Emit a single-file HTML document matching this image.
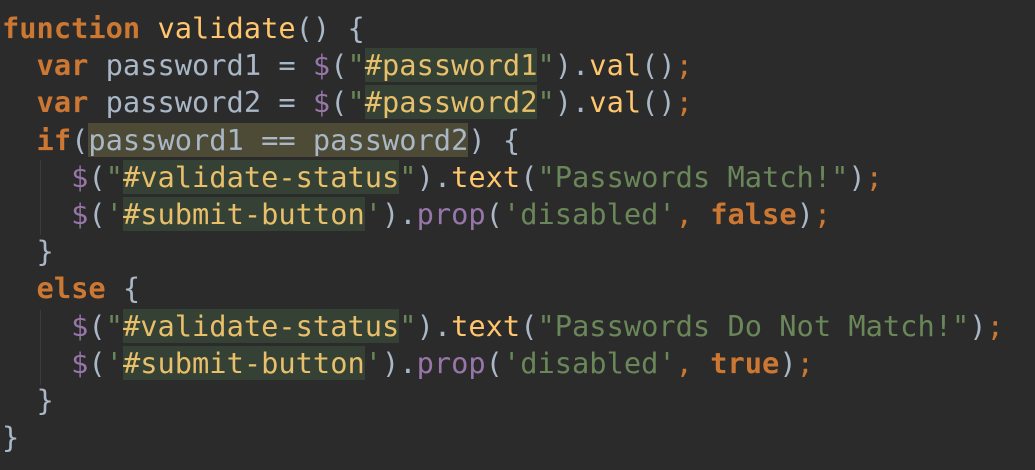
<!DOCTYPE html>
<html><head><style>
html,body{margin:0;padding:0;background:#2b2b2b;width:1035px;height:470px;overflow:hidden}
pre{margin:0;position:absolute;left:2px;top:10px;font-family:"DejaVu Sans Mono","Liberation Mono",monospace;font-size:28.7px;line-height:37.2px;color:#a9b7c6}
.k{color:#cc7832;font-weight:bold}
.f{color:#ffc66d}
.d{color:#9876aa}
.s{color:#6a8759}
.h{background:#344134;color:#e8bf6a}
.c{background:#4d4b36}
.o{color:#cc7832}
.g{position:absolute;width:1px;background:#3b3b3b}
</style></head><body>
<div class="g" style="left:40px;top:160px;height:75px"></div>
<div class="g" style="left:40px;top:310px;height:75px"></div>
<pre><span class="k">function</span> <span class="f">validate</span>() {
  <span class="k">var</span> password1 = <span class="d">$</span>(<span class="s">"</span><span class="h">#password1</span><span class="s">"</span>).<span class="f">val</span>()<span class="o">;</span>
  <span class="k">var</span> password2 = <span class="d">$</span>(<span class="s">"</span><span class="h">#password2</span><span class="s">"</span>).<span class="f">val</span>()<span class="o">;</span>
  <span class="k">if</span>(<span class="c">password1 == password2</span>) {
    <span class="d">$</span>(<span class="s">"</span><span class="h">#validate-status</span><span class="s">"</span>).<span class="f">text</span>(<span class="s">"Passwords Match!"</span>)<span class="o">;</span>
    <span class="d">$</span>(<span class="s">'</span><span class="h">#submit-button</span><span class="s">'</span>).<span class="d">prop</span>(<span class="s">'disabled'</span><span class="o">,</span> <span class="k">false</span>)<span class="o">;</span>
  }
  <span class="k">else</span> {
    <span class="d">$</span>(<span class="s">"</span><span class="h">#validate-status</span><span class="s">"</span>).<span class="f">text</span>(<span class="s">"Passwords Do Not Match!"</span>)<span class="o">;</span>
    <span class="d">$</span>(<span class="s">'</span><span class="h">#submit-button</span><span class="s">'</span>).<span class="d">prop</span>(<span class="s">'disabled'</span><span class="o">,</span> <span class="k">true</span>)<span class="o">;</span>
  }
}</pre>
</body></html>
